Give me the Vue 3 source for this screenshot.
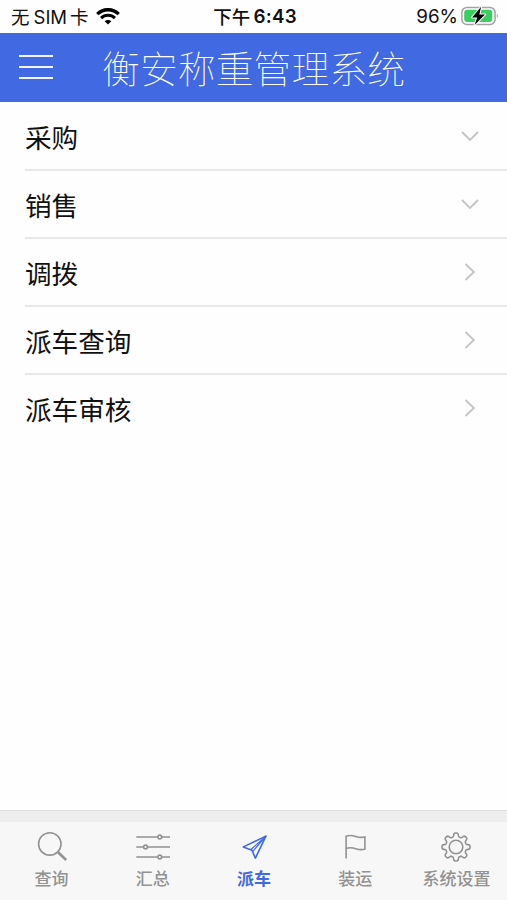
<script setup>
import { ref } from 'vue'

const rows = ref([
  { label: '采购', expandable: true },
  { label: '销售', expandable: true },
  { label: '调拨', expandable: false },
  { label: '派车查询', expandable: false },
  { label: '派车审核', expandable: false },
])

const tabs = [
  { label: '查询', icon: 'search' },
  { label: '汇总', icon: 'sliders' },
  { label: '派车', icon: 'plane' },
  { label: '装运', icon: 'flag' },
  { label: '系统设置', icon: 'gear' },
]
const active = ref('派车')

// Eight-tooth gear outline built from a flattened cosine wave around a circle.
const gearPath = (() => {
  const pts = []
  for (let i = 0; i < 192; i++) {
    const a = (i / 192) * Math.PI * 2
    const r = 12.2 + 1.8 * Math.tanh(2 * Math.cos(8 * a)) / Math.tanh(2)
    pts.push(`${(18 + r * Math.sin(a)).toFixed(2)} ${(18 - r * Math.cos(a)).toFixed(2)}`)
  }
  return `M${pts.join('L')}Z`
})()
</script>

<template>
  <div class="screen">
    <div class="status">
      <div class="carrier">
        <span class="cn">无</span><span class="sim">SIM</span><span class="cn">卡</span>
        <svg class="wifi" width="24" height="17" viewBox="0 0 24 17">
          <path d="M1.3 6.1a15.2 15.2 0 0 1 21.4 0" fill="none" stroke="#000" stroke-width="3.4" />
          <path d="M5.1 10.1a9.8 9.8 0 0 1 13.8 0" fill="none" stroke="#000" stroke-width="3" />
          <path d="M12 16.6l-3.3-3.3a4.7 4.7 0 0 1 6.6 0z" fill="#000" />
        </svg>
      </div>
      <div class="clock"><span class="ampm">下午</span><span>6:43</span></div>
      <div class="power">
        <span>96%</span>
        <svg width="38" height="21" viewBox="0 0 38 21">
          <rect x="0.9" y="1.4" width="33.2" height="17" rx="5" fill="#fff" stroke="#a4a4a4" stroke-width="1.5" />
          <rect x="3.2" y="3.7" width="28" height="12.4" rx="3" fill="#38cf60" />
          <path d="M35.8 7.5q2 2.4 0 4.8z" fill="#a4a4a4" />
          <path d="M20.2 0.8 11 11.5h5.2L13.6 19 24 8.5h-5.7z" fill="#000" stroke="#fff" stroke-width="2" stroke-linejoin="round" paint-order="stroke" />
        </svg>
      </div>
    </div>

    <header class="header">
      <button class="menu" aria-label="菜单"><i></i><i></i><i></i></button>
      <h1>衡安称重管理系统</h1>
    </header>

    <main class="list">
      <div v-for="row in rows" :key="row.label" class="row">
        <span>{{ row.label }}</span>
        <svg class="chevron" width="20" height="20" viewBox="0 0 20 20">
          <path v-if="row.expandable" d="M2 6l8 8 8-8" />
          <path v-else d="M5.5 2l8.3 8-8.3 8" />
        </svg>
      </div>
    </main>

    <div class="strip"></div>
    <nav class="tabs">
      <div v-for="tab in tabs" :key="tab.label" class="tab" :class="{ active: tab.label === active }">
        <svg width="36" height="36" viewBox="0 0 36 36">
          <g v-if="tab.icon === 'search'">
            <circle cx="15.8" cy="14.9" r="11.2" />
            <path d="M24 23.2l8.2 7.8" stroke-width="2.6" />
          </g>
          <g v-else-if="tab.icon === 'sliders'">
            <path d="M1.3 8h21.2M27 8h8M1.3 18h6.9M12.8 18H35M1.3 28h21.2M27 28h8" />
            <circle cx="24.8" cy="8" r="1.9" />
            <circle cx="10.5" cy="18" r="1.9" />
            <circle cx="24.8" cy="28" r="1.9" />
          </g>
          <g v-else-if="tab.icon === 'plane'" stroke-linejoin="round">
            <path d="M7.3 17.9L29.9 7.1 19.4 29.2 16 21.2z" />
            <path d="M14.6 20.8L29.9 7.1 16.6 22.6" stroke-width="1.2" />
          </g>
          <g v-else-if="tab.icon === 'flag'">
            <path d="M9.1 29.5V7.2c4-1.3 7-.6 9.6.3 3 1 6 1.2 9.2.5v12.2c-3.2.7-6.2.5-9.2-.5-2.6-.9-5.6-1.6-9.6-.3" />
          </g>
          <g v-else>
            <path :d="gearPath" />
            <circle cx="18" cy="18" r="6.8" />
          </g>
        </svg>
        <span>{{ tab.label }}</span>
      </div>
    </nav>
  </div>
</template>

<style>
body {
  margin: 0;
  background: #fff;
}
</style>

<style scoped>
.screen {
  display: flex;
  flex-direction: column;
  width: 507px;
  height: 900px;
  overflow: hidden;
  background: #fefefe;
  color: #111;
  font-family: 'Noto Sans CJK SC', sans-serif;
}
.status {
  display: grid;
  grid-template-columns: 1fr auto 1fr;
  align-items: center;
  box-sizing: border-box;
  flex: none;
  height: 33px;
  padding: 0 8px 0 11px;
  font-family: Inter, 'Noto Sans CJK SC', sans-serif;
  font-size: 18.8px;
  line-height: 32px;
}
.carrier,
.clock,
.power {
  display: flex;
  align-items: center;
}
.carrier span,
.clock span,
.power span {
  padding-top: 1px;
}
.cn {
  font-size: 18.5px;
}
.sim {
  margin: 0 3px 0 4px;
  font-size: 18.5px;
}
.wifi {
  margin-left: 7px;
}
.clock {
  font-weight: 600;
  letter-spacing: 0.2px;
}
.ampm {
  margin-right: 3px;
  font-size: 18.5px;
  font-weight: 500;
}
.power {
  justify-content: flex-end;
  gap: 3px;
}
.header {
  display: flex;
  align-items: center;
  flex: none;
  height: 69px;
  background: #4169e1;
}
.menu {
  display: flex;
  flex-direction: column;
  gap: 9px;
  width: 34px;
  margin: 0 0 0 19px;
  padding: 0 0 2px;
  border: 0;
  background: none;
}
.menu i {
  height: 2px;
  background: #f2f5ff;
}
h1 {
  margin: 0 0 0 49px;
  padding-bottom: 1px;
  color: #fff;
  font-size: 37.9px;
  font-weight: 100;
  line-height: 68px;
  white-space: nowrap;
}
.list {
  flex: 1;
  padding-top: 1px;
}
.row {
  display: flex;
  align-items: center;
  justify-content: space-between;
  box-sizing: border-box;
  height: 68px;
  margin-left: 25px;
  padding-right: 27px;
  border-bottom: 2px solid #e8e8e8;
  font-size: 26.6px;
}
.row:last-child {
  border-bottom-color: transparent;
}
.chevron path {
  fill: none;
  stroke: #c3c3c6;
  stroke-width: 1.8;
}
.strip {
  box-sizing: border-box;
  flex: none;
  height: 12px;
  border-top: 1px solid #dedede;
  background: #ededee;
}
.tabs {
  display: flex;
  flex: none;
  box-sizing: border-box;
  height: 78px;
  padding-left: 1px;
  background: #f7f7f7;
}
.tab {
  display: flex;
  flex: 1 1 0;
  flex-direction: column;
  align-items: center;
  padding-top: 7px;
  color: #929292;
  font-size: 17px;
  font-weight: 500;
  line-height: 26px;
  white-space: nowrap;
}
.tab svg {
  fill: none;
  stroke: currentColor;
  stroke-width: 1.6;
}
.active {
  color: #4169e1;
  font-weight: 700;
}
</style>
